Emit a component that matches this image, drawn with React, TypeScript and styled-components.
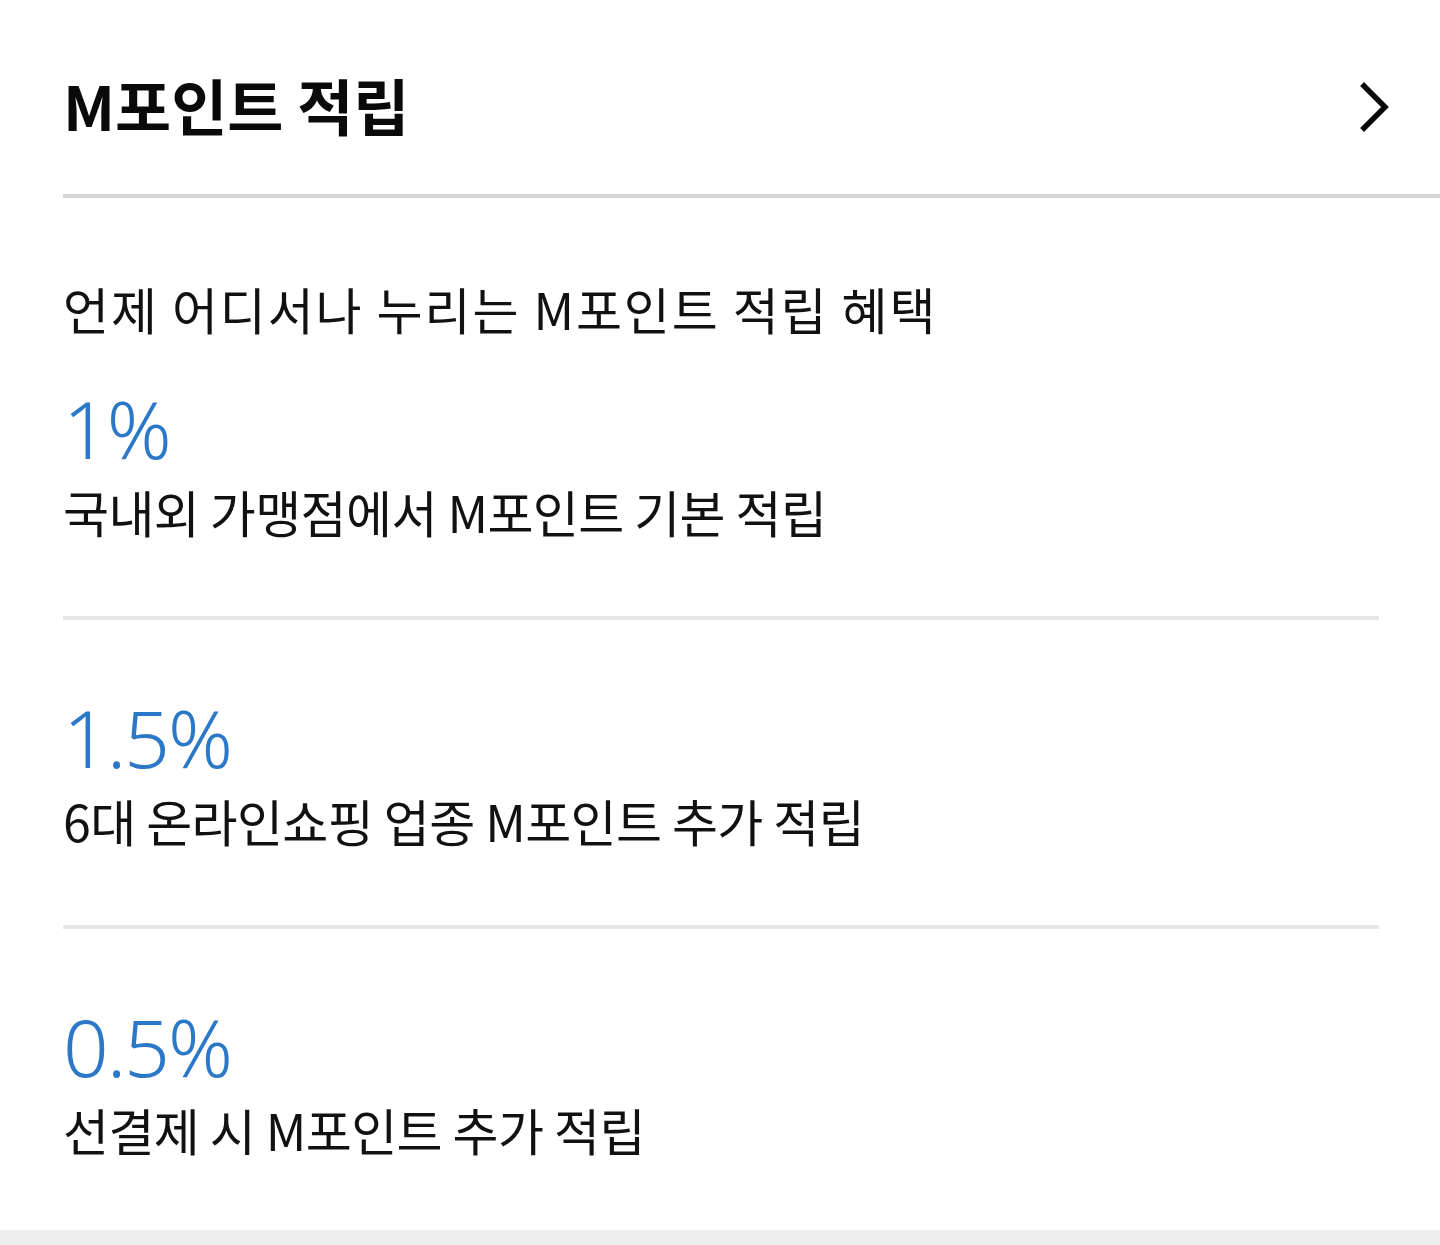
import { createGlobalStyle, styled } from 'styled-components'

const GlobalStyle = createGlobalStyle`
  html, body {
    margin: 0;
    padding: 0;
    background: #ffffff;
  }
  body {
    font-family: 'Noto Sans CJK KR', 'Noto Sans', sans-serif;
    color: #111111;
  }
`

const Page = styled.div`
  display: flex;
  flex-direction: column;
  min-height: 1245px;
  background: #ffffff;
`

const Header = styled.div`
  display: flex;
  align-items: center;
  justify-content: space-between;
  box-sizing: border-box;
  height: 198px;
  margin-left: 63px;
  padding: 14px 50px 0 0;
  border-bottom: 4px solid #d5d5d5;
`

const Title = styled.h2`
  margin: 0;
  font-size: 61px;
  font-weight: 700;
  line-height: 1;
  letter-spacing: 0;
  color: #0a0a0a;
`

const ChevronButton = styled.button`
  display: flex;
  align-items: center;
  justify-content: center;
  padding: 0;
  margin-top: 8px;
  border: 0;
  background: none;
  cursor: pointer;
`

const Body = styled.div`
  padding: 80px 61px 0 63px;
`

const Intro = styled.p`
  margin: 0;
  font-size: 50px;
  font-weight: 400;
  line-height: 60px;
  letter-spacing: 1.9px;
  color: #111111;
`

const List = styled.ul`
  list-style: none;
  margin: 0;
  padding: 0;
`

const Item = styled.li`
  display: flex;
  flex-direction: column;
  gap: 8px;
  padding: 72px 0 75px;

  &:first-child {
    padding-top: 45px;
  }

  &:last-child {
    padding-bottom: 71px;
  }

  & + & {
    border-top: 4px solid #e6e6e6;
  }
`

const Rate = styled.span`
  font-family: 'Noto Sans', 'Open Sans', sans-serif;
  font-size: 80px;
  font-weight: 300;
  line-height: 90px;
  letter-spacing: -2px;
  color: #2c78c8;
`

const Desc = styled.span`
  font-size: 50px;
  font-weight: 400;
  line-height: 60px;
  letter-spacing: -0.6px;
  color: #111111;
`

const Footer = styled.div`
  flex: 1;
  min-height: 14px;
  background: #eeeeee;
`

const benefits = [
  { rate: '1%', desc: '국내외 가맹점에서 M포인트 기본 적립' },
  { rate: '1.5%', desc: '6대 온라인쇼핑 업종 M포인트 추가 적립' },
  { rate: '0.5%', desc: '선결제 시 M포인트 추가 적립' },
]

export default function App() {
  return (
    <Page>
      <GlobalStyle />
      <Header>
        <Title>M포인트 적립</Title>
        <ChevronButton aria-label="더보기">
          <svg width="34" height="52" viewBox="0 0 34 52" fill="none">
            <path d="M8 4 L29 25 L8 46" stroke="#0a0a0a" strokeWidth="5.5" strokeLinecap="square" strokeLinejoin="miter" />
          </svg>
        </ChevronButton>
      </Header>
      <Body>
        <Intro>언제 어디서나 누리는 M포인트 적립 혜택</Intro>
        <List>
          {benefits.map((b) => (
            <Item key={b.rate}>
              <Rate>{b.rate}</Rate>
              <Desc>{b.desc}</Desc>
            </Item>
          ))}
        </List>
      </Body>
      <Footer />
    </Page>
  )
}
